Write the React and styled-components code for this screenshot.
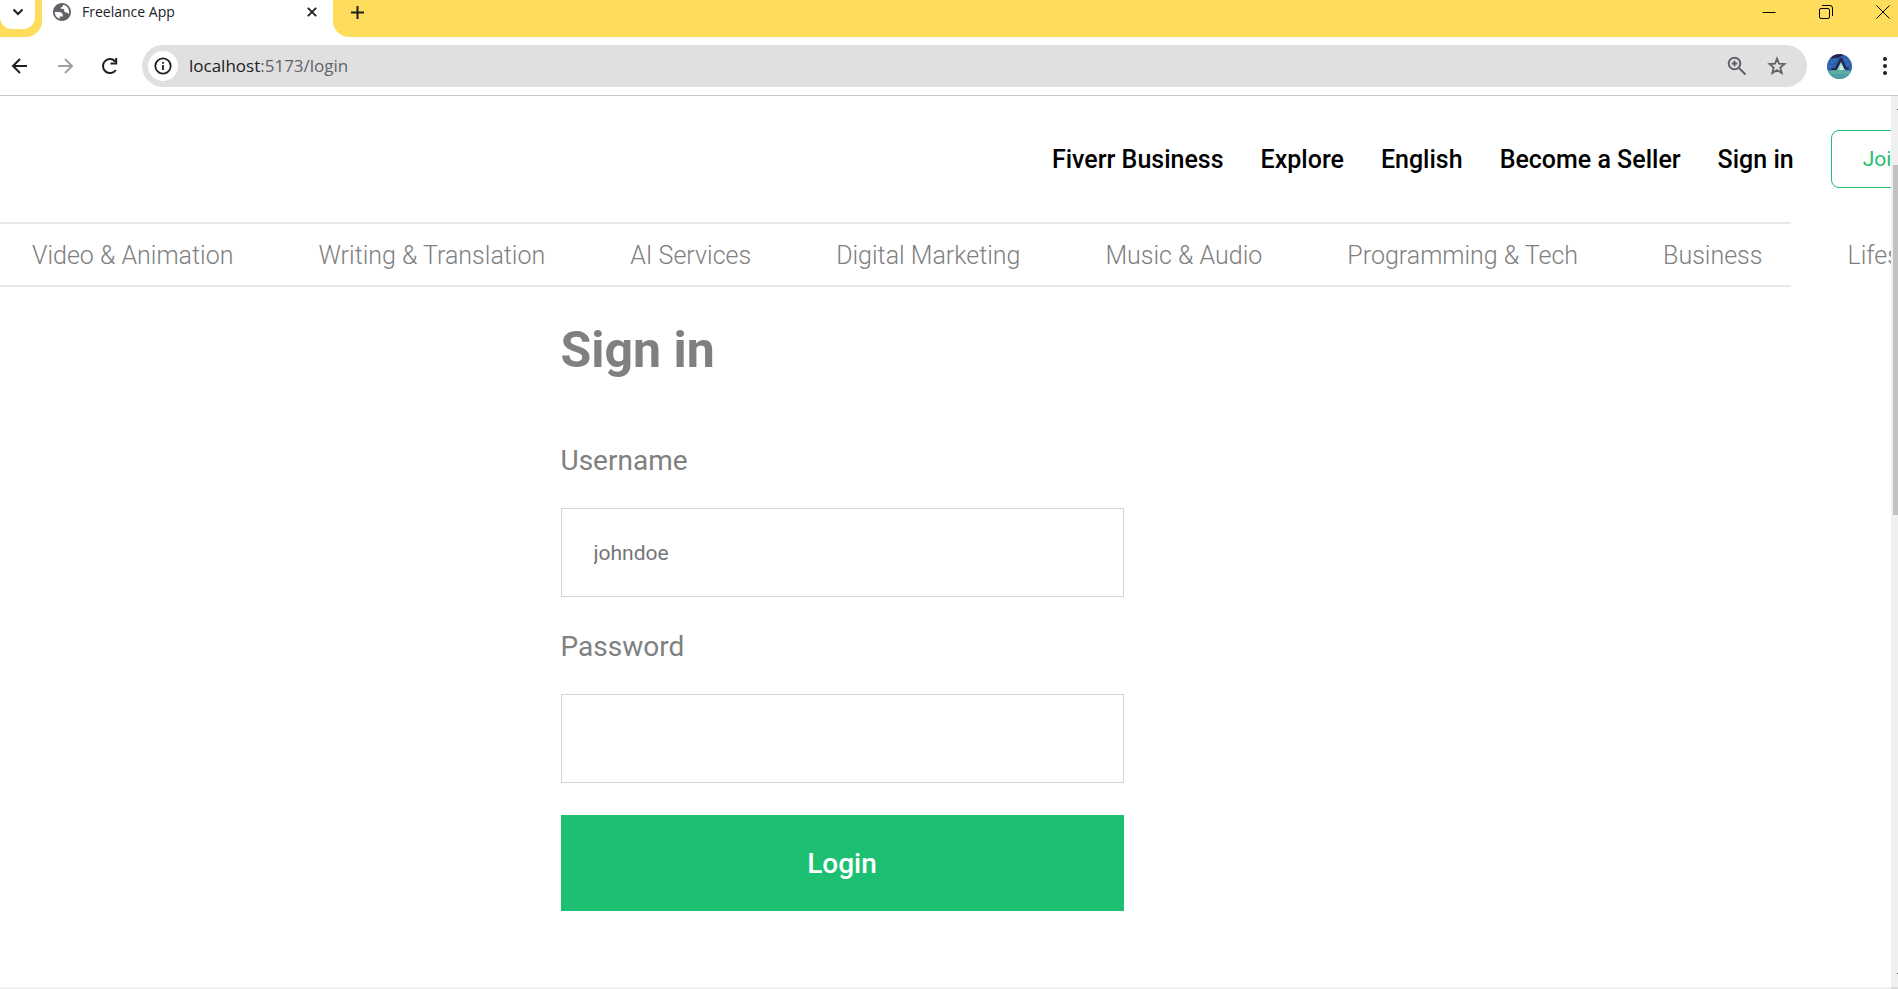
import React from "react";
import styled, { createGlobalStyle } from "styled-components";

const GlobalStyle = createGlobalStyle`
  *, *::before, *::after { box-sizing: border-box; }
  body { margin: 0; background: #fff; font-family: Roboto, "Liberation Sans", sans-serif; }
  button, input { font: inherit; }
`;

const Window = styled.div`
  display: flex;
  flex-direction: column;
  height: 100vh;
  overflow: hidden;
`;

/* Browser tab strip */
const TabStrip = styled.div`
  display: flex;
  height: 37px;
  flex: none;
`;
const StripStart = styled.div`
  width: 42px;
  background: #ffdd5c;
  border-bottom-right-radius: 16px;
`;
const StripEnd = styled.div`
  display: flex;
  flex: 1;
  justify-content: space-between;
  padding-left: 18px;
  background: #ffdd5c;
  border-bottom-left-radius: 16px;
`;
const WindowControls = styled.div`
  display: flex;
  gap: 43px;
  margin-right: 8px;
`;
const IconButton = styled.button`
  display: flex;
  align-items: center;
  justify-content: center;
  flex: none;
  width: ${(p) => p.$size || 16}px;
  height: ${(p) => p.$height || p.$size || 16}px;
  padding: 0;
  border: 0;
  background: none;
  color: ${(p) => p.$color || "#1f1f1f"};
  svg { display: block; flex: none; }
`;
const TabSearch = styled(IconButton)`
  width: 35px;
  height: 29px;
  padding-bottom: 5px;
  background: #fff;
  border-radius: 0 0 12px 12px;
`;
const Tab = styled.div`
  display: flex;
  align-items: center;
  width: 291px;
  height: 24px;
  padding: 0 15px 0 11px;
  gap: 11px;
  color: #202124;
  font: 14px/24px "Open Sans", "Noto Sans", sans-serif;
`;
const TabTitle = styled.span`
  flex: 1;
`;

/* Browser toolbar */
const Toolbar = styled.div`
  display: flex;
  align-items: center;
  flex: none;
  height: 59px;
  padding: 0 4px 0 9px;
  border-bottom: 1px solid #c9c9c9;
`;
const NavButtons = styled.div`
  display: flex;
  gap: 23px;
  margin-right: 21px;
`;
const Omnibox = styled.form`
  display: flex;
  align-items: center;
  flex: 1;
  height: 42px;
  padding: 0 20px 0 6px;
  border-radius: 21px;
  background: #e0e0e0;
`;
const SiteInfo = styled(IconButton)`
  background: #fff;
  border-radius: 50%;
`;
const Address = styled.a`
  flex: 1;
  margin-left: 11px;
  color: #5f6368;
  text-decoration: none;
  font: 17px/24px "Open Sans", "Noto Sans", sans-serif;
  b { font-weight: 400; color: #202124; }
`;
const OmniActions = styled.div`
  display: flex;
  gap: 20px;
`;
const ProfileActions = styled.div`
  display: flex;
  align-items: center;
  gap: 24px;
  margin-left: 20px;
`;

/* Page viewport */
const Viewport = styled.div`
  display: flex;
  flex: 1;
  min-height: 0;
`;
const Page = styled.div`
  flex: 1;
  min-width: 0;
  overflow: hidden;
`;
const Scrollbar = styled.div`
  display: flex;
  flex-direction: column;
  align-items: flex-end;
  flex: none;
  width: 7px;
  padding: 13px 0;
  background: #f0f0f0;
`;
const ScrollArrow = styled.span`
  width: 1px;
  height: 1px;
  background: #505050;
`;
const ScrollTrack = styled.div`
  flex: 1;
  width: 5px;
  padding-top: 55px;
`;
const ScrollThumb = styled.div`
  height: 350px;
  background: #c1c1c1;
`;
const BottomScrollbar = styled.div`
  display: flex;
  justify-content: flex-end;
  flex: none;
  height: 2px;
  background: #f0f0f0;
`;
const ScrollCorner = styled.span`
  width: 7px;
  background: #dcdcdc;
`;

const Header = styled.header`
  display: flex;
  align-items: center;
  justify-content: flex-end;
  gap: 37px;
  width: calc(100% + 44px);
  height: 126px;
`;
const PageLink = styled.a`
  flex: none;
  padding-top: 2px;
  color: ${(p) => (p.$light ? "gray" : "#000")};
  font-size: 25px;
  font-weight: ${(p) => (p.$light ? 300 : 500)};
  line-height: 30px;
  text-decoration: none;
`;
const JoinButton = styled.button`
  flex: none;
  height: 58px;
  padding: 0 31px;
  border: 1px solid #1dbf73;
  border-radius: 8px;
  background: #fff;
  color: #1dbf73;
  font-size: 21px;
`;
const Menu = styled.nav`
  display: flex;
  align-items: center;
  gap: 85px;
  height: 65px;
  margin-right: 100px;
  padding-left: 32px;
  border-top: 2px solid #e7e7e7;
  border-bottom: 2px solid #e7e7e7;
`;
const Main = styled.main`
  display: flex;
  justify-content: center;
  padding: 33px 207px 0 0;
`;
const LoginForm = styled.form`
  display: flex;
  flex-direction: column;
  width: 100%;
  max-width: 563px;
`;
const Title = styled.h1`
  margin: 0 0 63px;
  color: gray;
  font-size: 50px;
  font-weight: 700;
  line-height: 60px;
`;
const Label = styled.label`
  margin-bottom: 29px;
  color: gray;
  font-size: 28px;
  line-height: 36px;
`;
const Field = styled.input`
  height: 89px;
  margin-bottom: 32px;
  padding: 0 32px;
  border: 1px solid #d3d3d3;
  background: #fff;
  font-size: 21px;
  outline: none;
  &::placeholder { color: #757575; opacity: 1; }
`;
const LoginButton = styled.button`
  height: 96px;
  border: 0;
  background: #1dbf73;
  color: #fff;
  font-size: 28px;
  font-weight: 500;
`;

const headerLinks = ["Fiverr Business", "Explore", "English", "Become a Seller", "Sign in"];
const categories = [
  "Video & Animation",
  "Writing & Translation",
  "AI Services",
  "Digital Marketing",
  "Music & Audio",
  "Programming & Tech",
  "Business",
  "Lifestyle",
];

const Svg = ({ w = 18, h, vb, children, ...rest }) => (
  <svg width={w} height={h || w} viewBox={vb || `0 0 ${w} ${h || w}`} fill="none" stroke="currentColor" strokeWidth="2" aria-hidden="true" {...rest}>
    {children}
  </svg>
);

const Globe = () => (
  <Svg w={18} vb="2 2 20 20" fill="#5f6368" stroke="none">
    <path d="M12 2C6.480 2 2 6.480 2 12s4.480 10 10 10 10-4.480 10-10S17.520 2 12 2zM4 12h4.400c3.407.022 4.922 1.730 4.543 5.127H9.488v2.470A8.004 8.004 0 0 1 4 12zm16 0c0 .86-.14 1.690-.39 2.470-.8-1.300-1.900-1.970-3.110-1.970-1.500 0-1.900-.9-2-2-.1-1.600-1.200-2-2.500-2h-1.500c0-1.700.9-2.100 2.500-2.200V4.030A8 8 0 0 1 20 12z" />
  </Svg>
);

const Avatar = () => (
  <Svg w={25} stroke="none">
    <defs>
      <clipPath id="avatarClip"><circle cx="12.500" cy="12.500" r="12.500" /></clipPath>
    </defs>
    <g clipPath="url(#avatarClip)">
      <rect width="25" height="25" fill="#2a62ac" />
      <path d="M2 4Q11 5 16 1L16 0H3z" fill="#2d2350" />
      <path d="M0 17Q12 15 25 17V25H0z" fill="#5cae9f" />
      <path d="M0 20H25V25H0z" fill="#4e9fa3" />
      <path d="M4 16L5 14L8 14L13 4L15 4L19 13L22 14L21 16L17 15L14 8L10 16z" fill="#2d2350" />
      <path d="M10 16L14 8L18 16z" fill="#8fe0c8" />
      <path d="M13 16L14 10L16 16z" fill="#d6f7e0" />
      <g fill="#8fb8e6"><circle cx="5" cy="8" r=".6" /><circle cx="8" cy="6" r=".5" /><circle cx="19" cy="6" r=".6" /><circle cx="21" cy="10" r=".5" /><circle cx="3" cy="12" r=".5" /></g>
    </g>
  </Svg>
);

export default function App() {
  return (
    <Window>
      <GlobalStyle />
      <TabStrip>
        <StripStart>
          <TabSearch aria-label="Search tabs">
            <Svg w={12} h={8}><path d="M1.500 1.500L6 6L10.500 1.500" /></Svg>
          </TabSearch>
        </StripStart>
        <Tab>
          <Globe />
          <TabTitle>Freelance App</TabTitle>
          <IconButton $size={12} aria-label="Close tab">
            <Svg w={10}><path d="M.8.8L9.200 9.200M9.200.8L.8 9.200" strokeWidth="1.800" /></Svg>
          </IconButton>
        </Tab>
        <StripEnd>
          <IconButton $size={13} $height={25} aria-label="New tab">
            <Svg w={13}><path d="M6.500 0V13M0 6.500H13" /></Svg>
          </IconButton>
          <WindowControls>
            <IconButton $size={14} $height={23} aria-label="Minimize">
              <Svg w={14} strokeWidth="1" stroke="#000"><path d="M.5 7.500H13.500" /></Svg>
            </IconButton>
            <IconButton $size={14} $height={23} aria-label="Restore">
              <Svg w={14} strokeWidth="1" stroke="#000"><rect x=".5" y="3.500" width="10" height="10" rx="1.500" /><path d="M3 .5H11Q13.500.5 13.500 3V11" /></Svg>
            </IconButton>
            <IconButton $size={14} $height={23} aria-label="Close">
              <Svg w={14} strokeWidth="1" stroke="#000"><path d="M.5.5L13.500 13.500M13.500.5L.5 13.500" /></Svg>
            </IconButton>
          </WindowControls>
        </StripEnd>
      </TabStrip>

      <Toolbar>
        <NavButtons>
          <IconButton $size={22} aria-label="Back">
            <Svg w={22}><path d="M18 11H4.500M11 4L4 11L11 18" /></Svg>
          </IconButton>
          <IconButton $size={22} $color="#a0a0a0" aria-label="Forward">
            <Svg w={22}><path d="M4 11H17.500M11 4L18 11L11 18" /></Svg>
          </IconButton>
          <IconButton $size={22} aria-label="Reload">
            <Svg w={22}><path d="M16.800 15A7 7 0 1 1 16 6.200M17.200 3V8.500H11.500" /></Svg>
          </IconButton>
        </NavButtons>
        <Omnibox>
          <SiteInfo type="button" $size={30} aria-label="Site information">
            <Svg w={18}><circle cx="9" cy="9" r="7.700" strokeWidth="1.800" /><path d="M9 8V13M9 5V6.800" strokeWidth="1.800" /></Svg>
          </SiteInfo>
          <Address href="#login"><b>localhost</b>:5173/login</Address>
          <OmniActions>
            <IconButton type="button" $size={20} $color="#5f6368" aria-label="Zoom">
              <Svg w={20}><circle cx="7.500" cy="7.500" r="5.800" /><path d="M12 12L18.500 18.500M7.500 4.700V10.300M4.700 7.500H10.300" /></Svg>
            </IconButton>
            <IconButton type="button" $size={20} $color="#5f6368" aria-label="Bookmark">
              <Svg w={20}><path d="M10 2.600L12 7.600L17.500 8L13.300 11.600L14.700 17L10 14.100L5.300 17L6.700 11.600L2.500 8L8 7.600z" strokeWidth="1.800" /></Svg>
            </IconButton>
          </OmniActions>
        </Omnibox>
        <ProfileActions>
          <IconButton $size={25} aria-label="Profile"><Avatar /></IconButton>
          <IconButton $size={18} aria-label="Menu">
            <Svg w={18} fill="#1f1f1f" stroke="none"><circle cx="9" cy="2" r="2" /><circle cx="9" cy="9" r="2" /><circle cx="9" cy="16" r="2" /></Svg>
          </IconButton>
        </ProfileActions>
      </Toolbar>

      <Viewport>
        <Page>
          <Header>
            {headerLinks.map((t) => <PageLink key={t} href="#nav">{t}</PageLink>)}
            <JoinButton>Join</JoinButton>
          </Header>
          <Menu>
            {categories.map((t) => <PageLink key={t} $light href="#category">{t}</PageLink>)}
          </Menu>
          <Main>
            <LoginForm>
              <Title>Sign in</Title>
              <Label htmlFor="username">Username</Label>
              <Field id="username" type="text" placeholder="johndoe" />
              <Label htmlFor="password">Password</Label>
              <Field id="password" type="password" />
              <LoginButton type="submit">Login</LoginButton>
            </LoginForm>
          </Main>
        </Page>
        <Scrollbar>
          <ScrollArrow />
          <ScrollTrack><ScrollThumb /></ScrollTrack>
          <ScrollArrow />
        </Scrollbar>
      </Viewport>
      <BottomScrollbar><ScrollCorner /></BottomScrollbar>
    </Window>
  );
}
